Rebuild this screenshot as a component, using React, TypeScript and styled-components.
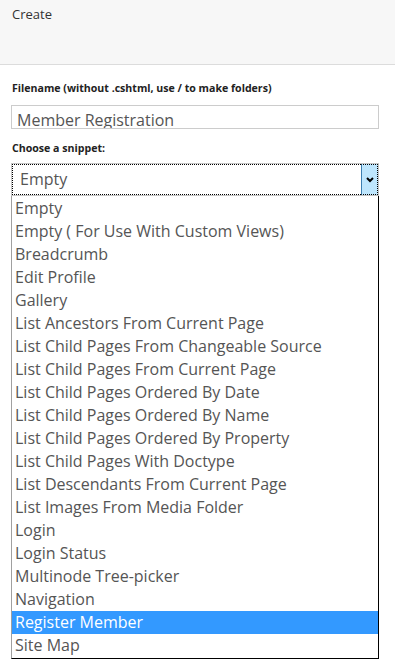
import React from 'react';
import styled, { createGlobalStyle } from 'styled-components';

const GlobalStyle = createGlobalStyle`
  html, body {
    margin: 0;
    padding: 0;
    background: #fff;
    font-family: 'Open Sans', 'DejaVu Sans', sans-serif;
  }
`;

const Page = styled.div`
  width: 395px;
  height: 668px;
  overflow: hidden;
`;

const Header = styled.div`
  height: 65px;
  box-sizing: border-box;
  padding: 5px 12px 0;
  background: #f7f7f7;
  border-bottom: 1px solid #dcdcdc;
  font-size: 13px;
  color: #333;
`;

const Form = styled.div`
  padding: 16px 11px 0;
`;

const Label = styled.div`
  padding-left: 1px;
  font-size: 10.6px;
  font-weight: 700;
  color: #222;
  line-height: 14px;
`;

const TextInput = styled.div`
  margin-top: 10px;
  width: 368px;
  height: 24px;
  box-sizing: border-box;
  border: 1px solid #ccc;
  padding-left: 5px;
  font-size: 16px;
  line-height: 28px;
  color: #555;
  overflow: hidden;
`;

const SnippetLabel = styled(Label)`
  margin-top: 12px;
`;

const Select = styled.div`
  margin-top: 8px;
  width: 368px;
  height: 33px;
  box-sizing: border-box;
  border: 1px solid #c4c4c4;
  display: flex;
`;

const SelectValue = styled.div`
  flex: 1;
  border: 1px dotted #000;
  border-right: none;
  padding-left: 7px;
  font-size: 16px;
  line-height: 29px;
  color: #555;
`;

const ArrowButton = styled.div`
  width: 17px;
  box-sizing: border-box;
  background: #bee6fd;
  border-left: 1px solid #3c7fb1;
  border-top: 1px dotted #000;
  border-right: 1px dotted #000;
  border-bottom: 1px dotted #000;
  display: flex;
  align-items: center;
  justify-content: center;
`;

const List = styled.div`
  width: 368px;
  box-sizing: border-box;
  border: 1px solid #000;
  border-top: none;
  border-left-color: #a0a0a0;
  padding: 1px 0;
`;

const Option = styled.div<{ $active?: boolean }>`
  height: 23px;
  padding-left: 3px;
  font-size: 16px;
  line-height: 23px;
  white-space: nowrap;
  color: ${({ $active }) => ($active ? '#fff' : '#555')};
  background: ${({ $active }) => ($active ? '#3399ff' : 'transparent')};
`;

const options = [
  'Empty',
  'Empty ( For Use With Custom Views)',
  'Breadcrumb',
  'Edit Profile',
  'Gallery',
  'List Ancestors From Current Page',
  'List Child Pages From Changeable Source',
  'List Child Pages From Current Page',
  'List Child Pages Ordered By Date',
  'List Child Pages Ordered By Name',
  'List Child Pages Ordered By Property',
  'List Child Pages With Doctype',
  'List Descendants From Current Page',
  'List Images From Media Folder',
  'Login',
  'Login Status',
  'Multinode Tree-picker',
  'Navigation',
  'Register Member',
  'Site Map',
];

export default function App() {
  return (
    <Page>
      <GlobalStyle />
      <Header>Create</Header>
      <Form>
        <Label>Filename (without .cshtml, use / to make folders)</Label>
        <TextInput>Member Registration</TextInput>
        <SnippetLabel>Choose a snippet:</SnippetLabel>
        <Select>
          <SelectValue>Empty</SelectValue>
          <ArrowButton>
            <svg width="8" height="6" viewBox="0 0 8 6">
              <path d="M1 1 L4 4 L7 1" stroke="#000" strokeWidth="2" fill="none" />
            </svg>
          </ArrowButton>
        </Select>
        <List>
          {options.map((o) => (
            <Option key={o} $active={o === 'Register Member'}>
              {o}
            </Option>
          ))}
        </List>
      </Form>
    </Page>
  );
}
